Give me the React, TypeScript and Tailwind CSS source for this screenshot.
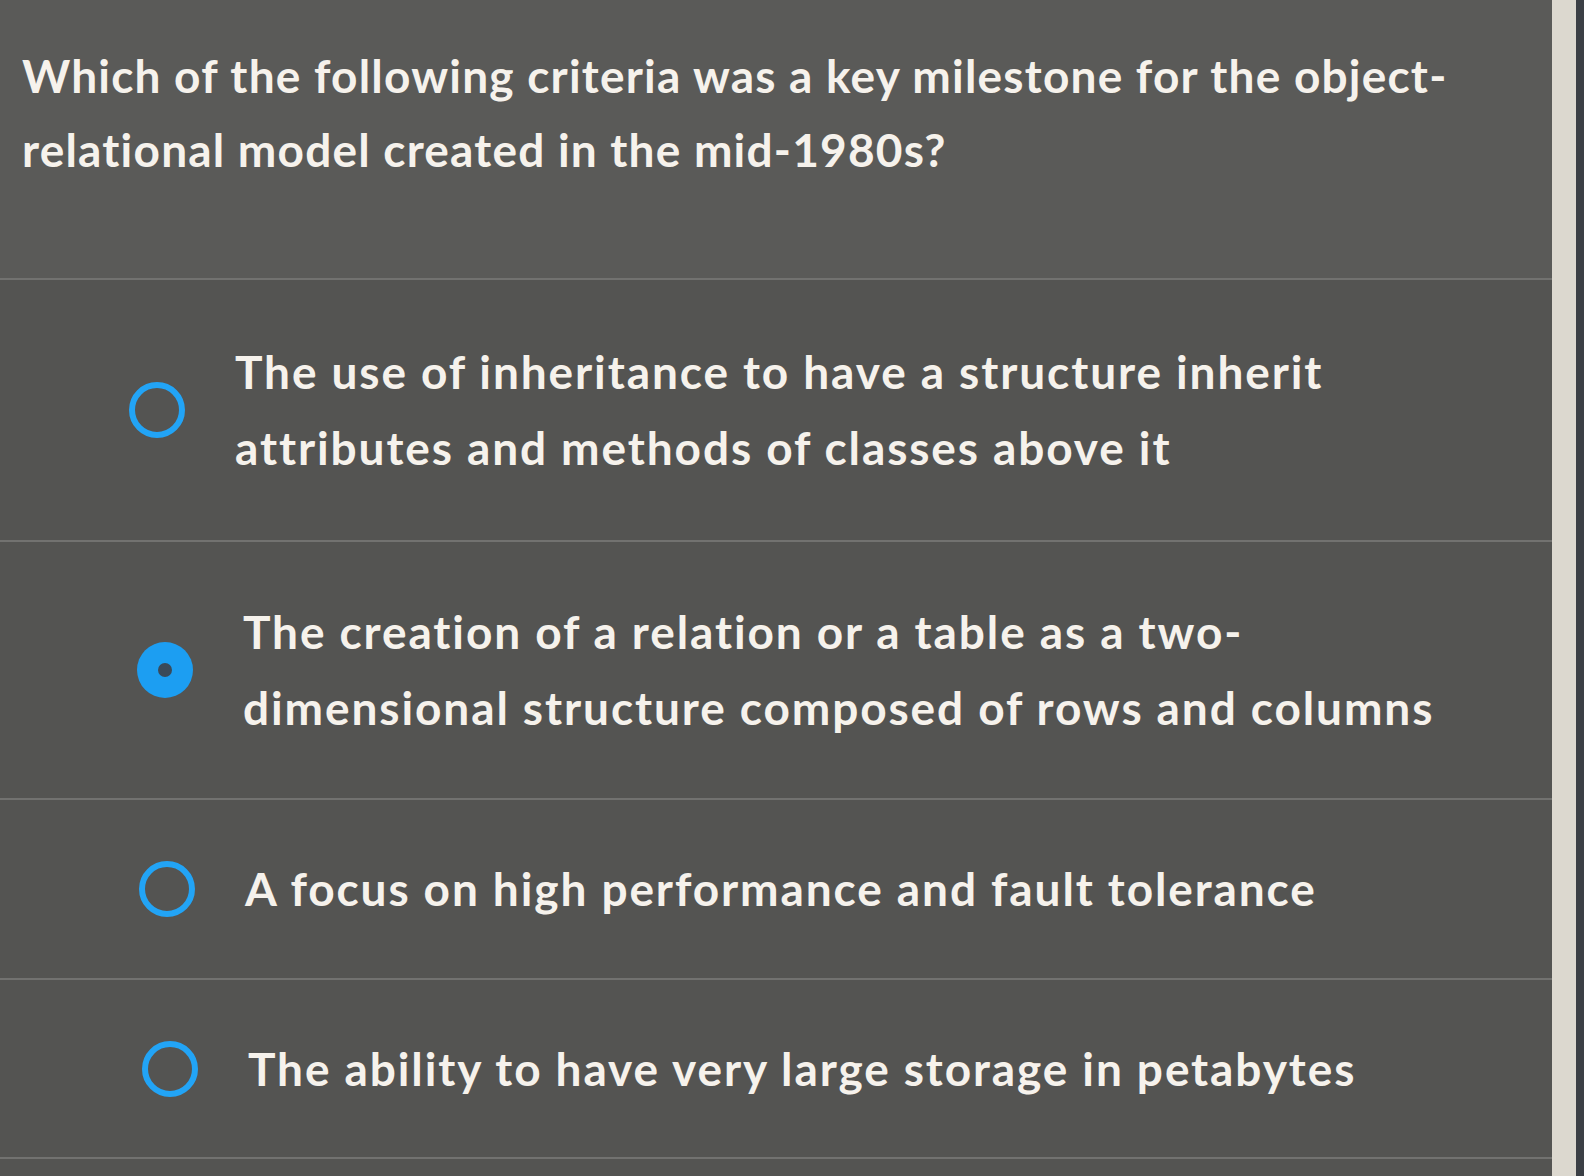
import React from "react";

type Option = { id: string; lines: string[]; selected?: boolean; row: string };

const options: Option[] = [
  {
    id: "a",
    lines: ["The use of inheritance to have a structure inherit", "attributes and methods of classes above it"],
    row: "h-[262px] pl-[129px]",
  },
  {
    id: "b",
    lines: ["The creation of a relation or a table as a two-", "dimensional structure composed of rows and columns"],
    selected: true,
    row: "h-[258px] pl-[137px]",
  },
  { id: "c", lines: ["A focus on high performance and fault tolerance"], row: "h-[180px] pl-[139px]" },
  { id: "d", lines: ["The ability to have very large storage in petabytes"], row: "h-[179px] pl-[142px]" },
];

function Radio({ selected }: { selected?: boolean }) {
  if (selected) {
    return (
      <div className="w-[56px] h-[56px] rounded-full bg-[#1c9ef2] flex items-center justify-center shrink-0">
        <div className="w-[14px] h-[14px] rounded-full bg-[#3a4a5a]" />
      </div>
    );
  }
  return <div className="w-[56px] h-[56px] rounded-full border-[6px] border-[#22a4f6] shrink-0" />;
}

export default function App() {
  return (
    <div
      className="w-[1584px] h-[1176px] overflow-hidden flex bg-[#3b3f45] text-[#f6f2ec]"
      style={{ fontFamily: "Lato, 'Open Sans', sans-serif" }}
    >
      <div className="w-[1552px] flex flex-col bg-[#545452]">
        <div className="h-[278px] shrink-0 bg-[#5a5a58] pl-[22px] pt-[39px] text-[46px] leading-[74px] font-bold tracking-[1.2px]">
          <span className="block">Which of the following criteria was a key milestone for the object-</span>
          <span className="block">relational model created in the mid-1980s?</span>
        </div>
        {options.map((o) => (
          <div
            key={o.id}
            className={`${o.row} shrink-0 border-t-2 border-[#727270] flex items-center`}
          >
            <Radio selected={o.selected} />
            <div className="ml-[50px] text-[46px] leading-[76px] font-bold tracking-[1.9px]">
              {o.lines.map((l) => (
                <span key={l} className="block">
                  {l}
                </span>
              ))}
            </div>
          </div>
        ))}
        <div className="flex-1 border-t-2 border-[#727270]" />
      </div>
      <div className="w-[24px] bg-[#dcd8cf]" />
    </div>
  );
}
